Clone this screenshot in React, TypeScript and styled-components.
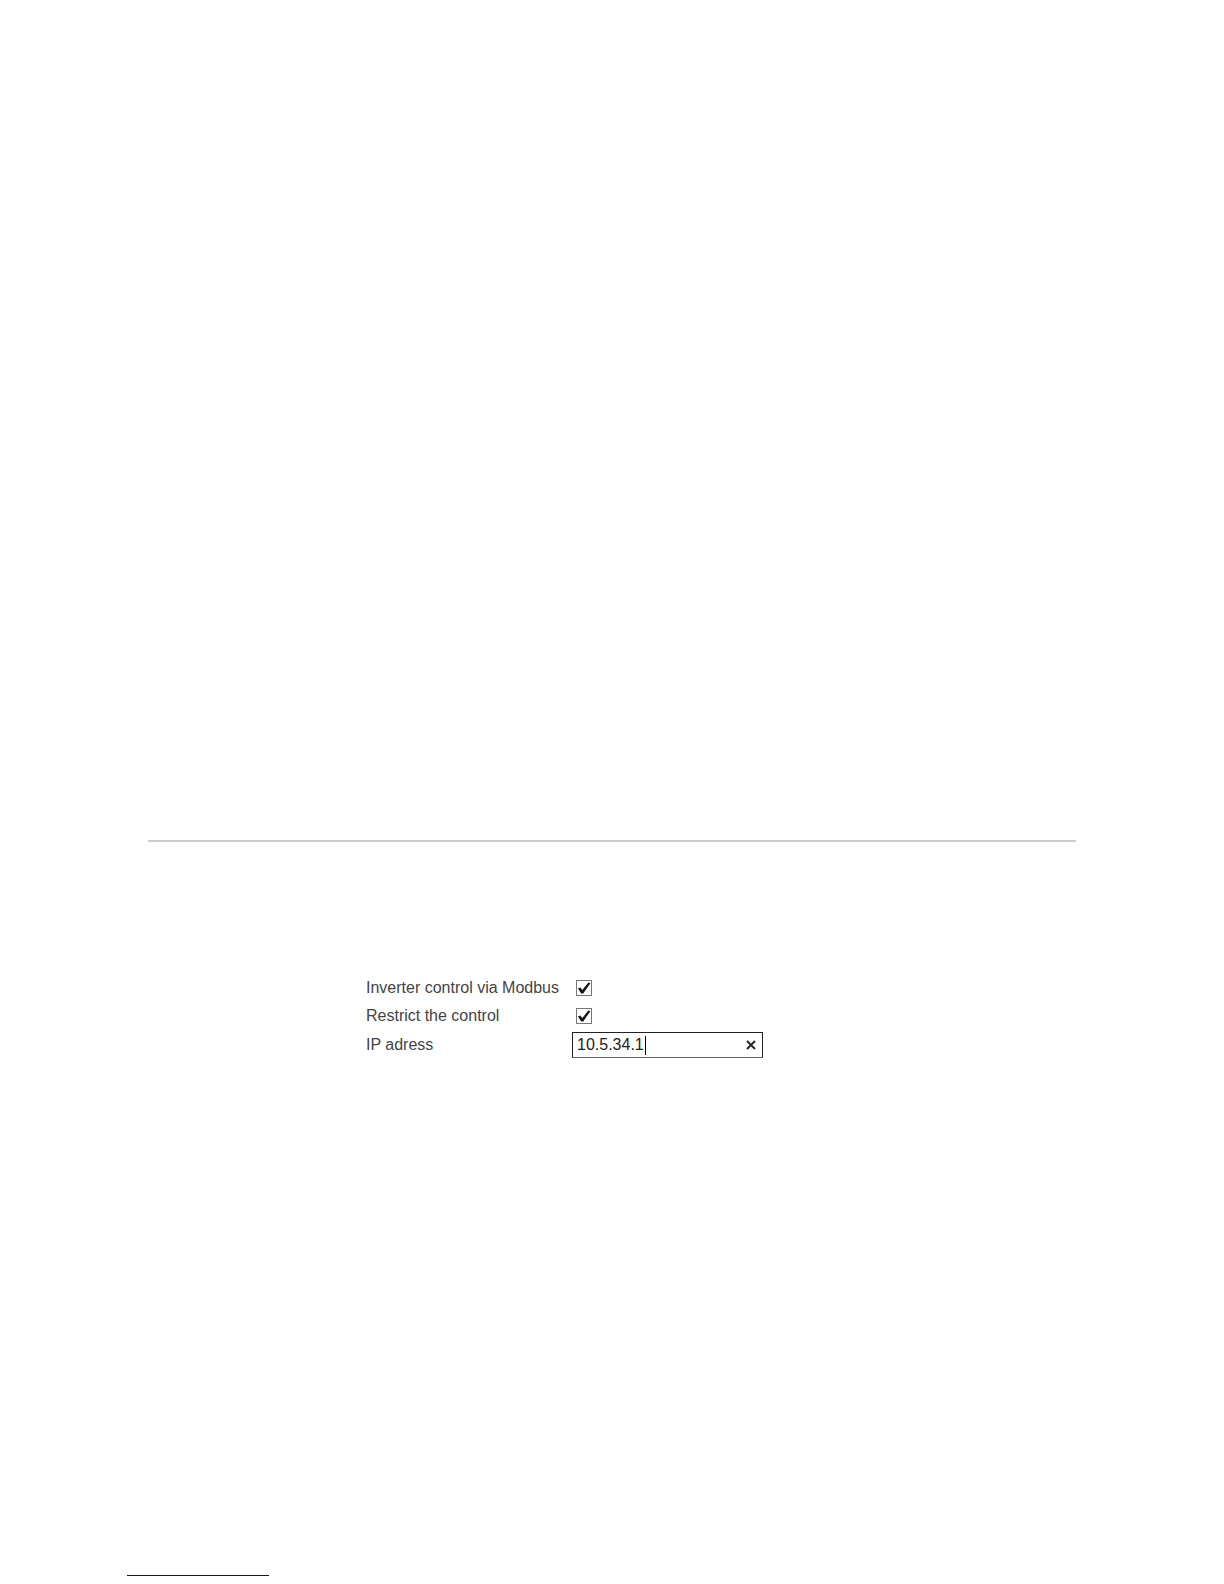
import React, { useState } from "react";
import styled, { createGlobalStyle } from "styled-components";

const GlobalStyle = createGlobalStyle`
  *, *::before, *::after { box-sizing: border-box; }
  body {
    margin: 0;
    background: #fff;
    color: #444;
    font: 16px/28px "Liberation Sans", Arial, sans-serif;
  }
`;

const Page = styled.div`
  display: flex;
  flex-direction: column;
  min-height: 100vh;
  padding: 840px 148px 8px 127px;
`;

const Divider = styled.hr`
  align-self: stretch;
  height: 2px;
  margin: 0 0 0 21px;
  border: 0;
  background: #cdcdcd;
`;

const SettingsForm = styled.form`
  display: flex;
  flex-direction: column;
  margin-top: 132px;
  margin-left: 239px;
`;

const Row = styled.div`
  display: grid;
  grid-template-columns: 206px minmax(0, 191px);
  align-items: center;
  min-height: 28px;
`;

const CheckCell = styled.div`
  display: flex;
  padding-left: 4px;
`;

const CheckBoxFrame = styled.span`
  position: relative;
  display: block;
  width: 16px;
  height: 16px;
`;

const CheckInput = styled.input`
  appearance: none;
  display: block;
  width: 100%;
  height: 100%;
  margin: 0;
  border: 1px solid #777;
  border-radius: 0;
  background: #fff;
  &:checked + svg { visibility: visible; }
`;

const CheckMark = styled.svg`
  position: absolute;
  inset: 0;
  width: 16px;
  height: 16px;
  visibility: hidden;
  pointer-events: none;
`;

const TextField = styled.div`
  display: flex;
  align-items: center;
  position: relative;
  height: 26px;
  margin: 2px 0;
  border: 1px solid #222;
  border-bottom-color: #666;
  background: #fff;
`;

const Caret = styled.span`
  position: absolute;
  left: 72px;
  top: 3px;
  width: 1px;
  height: 19px;
  background: #000;
  pointer-events: none;
`;

const TextInput = styled.input`
  flex: 1;
  min-width: 0;
  height: 24px;
  padding: 0 4px;
  border: 0;
  outline: 0;
  background: transparent;
  color: #222;
  font: inherit;
  line-height: 24px;
  &:focus + ${Caret}, &:placeholder-shown + ${Caret} { display: none; }
`;

const ClearButton = styled.button`
  display: flex;
  align-items: center;
  justify-content: center;
  width: 22px;
  height: 24px;
  padding: 0;
  border: 0;
  background: transparent;
  color: #222;
`;

const FooterRule = styled.hr`
  width: 142px;
  height: 1px;
  margin: auto 0 0;
  border: 0;
  background: #0c0c7c;
`;

function CheckRow({ id, label }: { id: string; label: string }) {
  return (
    <Row>
      <label htmlFor={id}>{label}</label>
      <CheckCell>
        <CheckBoxFrame>
          <CheckInput id={id} type="checkbox" defaultChecked />
          <CheckMark viewBox="0 0 16 16" aria-hidden="true">
            <path d="M2 8.4 L4.2 7.4 L6.3 10 L12.4 2.6 L14.4 3.2 L7.2 13.4 L5.2 13.4 Z" fill="#151515" />
          </CheckMark>
        </CheckBoxFrame>
      </CheckCell>
    </Row>
  );
}

export default function App() {
  const [address, setAddress] = useState("10.5.34.1");

  return (
    <>
      <GlobalStyle />
      <Page>
        <Divider />
        <SettingsForm>
          <CheckRow id="modbus-control" label="Inverter control via Modbus" />
          <CheckRow id="restrict-control" label="Restrict the control" />
          <Row>
            <label htmlFor="ip-address">IP adress</label>
            <TextField>
              <TextInput
                id="ip-address"
                type="text"
                placeholder=" "
                value={address}
                onChange={(e) => setAddress(e.target.value)}
              />
              <Caret />
              <ClearButton type="button" aria-label="Clear" onClick={() => setAddress("")}>
                <svg width="10" height="10" viewBox="0 0 10 10" aria-hidden="true">
                  <path d="M1 1 L9 9 M9 1 L1 9" stroke="currentColor" strokeWidth="1.9" fill="none" />
                </svg>
              </ClearButton>
            </TextField>
          </Row>
        </SettingsForm>
        <FooterRule />
      </Page>
    </>
  );
}
